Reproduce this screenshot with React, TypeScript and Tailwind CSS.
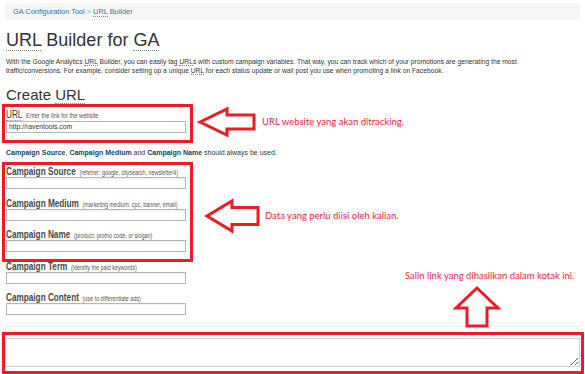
import React from "react";

const Abbr = ({ children }: { children: React.ReactNode }) => (
  <span className="border-b border-dotted border-[#8a8a8a]">{children}</span>
);

const Field = ({ label, hint }: { label: string; hint: string }) => (
  <div className="flex flex-col">
    <div className="h-[12px] leading-[12px] whitespace-nowrap origin-left scale-x-[0.82]">
      <span className="text-[10px] font-bold text-[#484848]">{label}</span>{" "}
      <span className="text-[6.6px] text-[#555]">{hint}</span>
    </div>
    <div className="mt-[1px] w-[180px] h-[12px] border border-[#b5b5b5] bg-white shadow-[inset_0_1px_1px_rgba(0,0,0,0.06)]" />
  </div>
);

export default function App() {
  return (
    <div
      className="relative w-[585px] h-[374px] overflow-hidden bg-white text-[#333]"
      style={{ fontFamily: '"Liberation Sans", Arial, sans-serif' }}
    >
      {/* breadcrumb */}
      <div className="mx-[5px] mt-[3px] h-[17px] flex items-center pl-[8px] bg-[#f5f5f5] rounded-[3px] text-[7.4px]">
        <span className="text-[#3a6fb0]">GA Configuration Tool</span>
        <span className="text-[#999] mx-[2px]">&gt;</span>
        <span className="text-[#3a6fb0]">
          <Abbr>URL</Abbr> Builder
        </span>
      </div>

      {/* title */}
      <h1 className="mt-[8px] ml-[6px] text-[18px] leading-[24px] text-[#333]">
        <Abbr>URL</Abbr> Builder for <Abbr>GA</Abbr>
      </h1>

      <p className="mt-[4.5px] ml-[6px] text-[6.72px] leading-[9px] text-[#333] whitespace-nowrap">
        With the Google Analytics <Abbr>URL</Abbr> Builder, you can easily tag <Abbr>URL</Abbr>s with custom campaign
        variables. That way, you can track which of your promotions are generating the most
        <br />
        traffic/conversions. For example, consider setting up a unique <Abbr>URL</Abbr> for each status update or wall post
        you use when promoting a link on Facebook.
      </p>

      <h2 className="mt-[11px] ml-[6px] text-[15px] leading-[18px] text-[#333]">
        Create <Abbr>URL</Abbr>
      </h2>

      {/* URL field */}
      <div className="mt-[3px] ml-[6px] flex flex-col">
        <div className="h-[12px] leading-[12px] whitespace-nowrap origin-left scale-x-[0.82]">
          <span className="text-[10px] text-[#333]">
            <Abbr>URL</Abbr>
          </span>{" "}
          <span className="text-[7px] text-[#555]">Enter the link for the website</span>
        </div>
        <div className="mt-[2.5px] w-[180px] h-[12px] border border-[#b5b5b5] bg-white flex items-center pl-[2px] text-[6.8px] text-[#333]">
          http://raventools.com
        </div>
      </div>

      <p className="mt-[15px] ml-[6px] text-[7px] leading-[9px] text-[#333] whitespace-nowrap">
        <b className="text-[#20406a]">Campaign Source</b>, <b className="text-[#20406a]">Campaign Medium</b> and{" "}
        <b className="text-[#20406a]">Campaign Name</b> should always be used.
      </p>

      {/* campaign fields */}
      <div className="mt-[7px] ml-[6px] flex flex-col gap-[6.5px]">
        <Field label="Campaign Source" hint="(referrer: google, citysearch, newsletter4)" />
        <Field label="Campaign Medium" hint="(marketing medium: cpc, banner, email)" />
        <Field label="Campaign Name" hint="(product, promo code, or slogan)" />
        <Field label="Campaign Term" hint="(identify the paid keywords)" />
        <Field label="Campaign Content" hint="(use to differentiate ads)" />
      </div>

      {/* separator and result box */}
      <div className="mt-[11px] mx-[4px] border-t border-[#eeeeee]" />
      <div className="mt-[11px] mx-[5px]">
        <textarea
          readOnly
          className="block w-[575px] h-[29px] border border-[#cfcfcf] bg-white resize"
        />
      </div>

      {/* annotation overlays */}
      <div className="absolute left-[2px] top-[104px] w-[191px] h-[39px] border-[3px] border-[#ec1c24] pointer-events-none" />
      <div className="absolute left-[2px] top-[162px] w-[191px] h-[100px] border-[3px] border-[#ec1c24] pointer-events-none" />
      <div className="absolute left-[2px] top-[332px] w-[582px] h-[42px] border-[3px] border-[#ec1c24] pointer-events-none" />

      <svg className="absolute inset-0 pointer-events-none" width="585" height="374" viewBox="0 0 585 374">
        <polygon
          points="200,122 227,109 227,115 254,115 254,129 227,129 227,135"
          fill="white"
          stroke="#ec1c24"
          strokeWidth="3"
          strokeLinejoin="miter"
        />
        <polygon
          points="207,216 232,201 232,207.5 258,207.5 258,224.5 232,224.5 232,231"
          fill="white"
          stroke="#ec1c24"
          strokeWidth="3"
          strokeLinejoin="miter"
        />
        <polygon
          points="477,288 498,308 487,308 487,326 467,326 467,308 456,308"
          fill="white"
          stroke="#ec1c24"
          strokeWidth="3"
          strokeLinejoin="miter"
        />
      </svg>

      <div
        className="absolute left-[262px] top-[116px] text-[9.5px] leading-[12px] text-[#e8283a] whitespace-nowrap"
        style={{ fontFamily: "Lato, sans-serif" }}
      >
        URL website yang akan ditracking.
      </div>
      <div
        className="absolute left-[265px] top-[210px] text-[9.5px] leading-[12px] text-[#e8283a] whitespace-nowrap"
        style={{ fontFamily: "Lato, sans-serif" }}
      >
        Data yang perlu diisi oleh kalian.
      </div>
      <div
        className="absolute left-[405px] top-[270px] text-[9.5px] leading-[12px] text-[#e8283a] whitespace-nowrap"
        style={{ fontFamily: "Lato, sans-serif" }}
      >
        Salin link yang dihasilkan dalam kotak ini.
      </div>
    </div>
  );
}
